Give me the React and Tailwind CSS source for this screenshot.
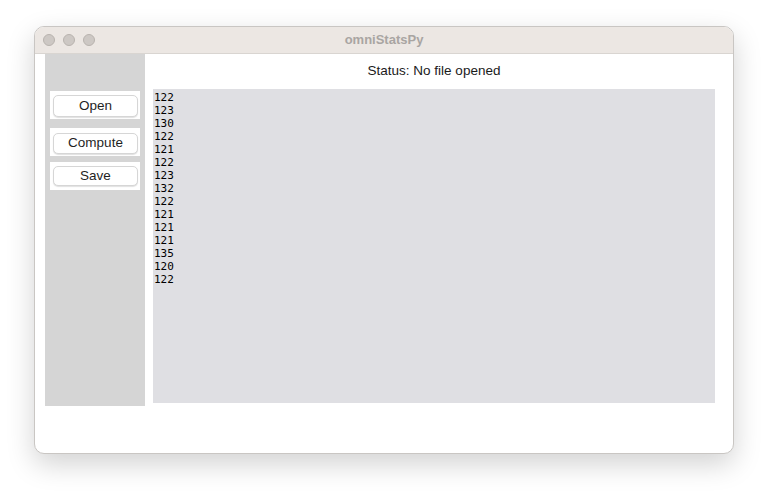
const values = [122, 123, 130, 122, 121, 122, 123, 132, 122, 121, 121, 121, 135, 120, 122];

function Btn({ label, frame, btn }) {
  return (
    <div className={`bg-white ${frame}`}>
      <div
        className={`flex items-center justify-center rounded-[5px] border border-[#d6d6d6] bg-white text-[13.5px] text-[#1f1f1f] shadow-[0_1px_1px_rgba(0,0,0,0.12)] ${btn}`}
      >
        {label}
      </div>
    </div>
  );
}

export default function App() {
  return (
    <div className="h-[496px] w-[768px] bg-white pl-[34px] pt-[26px] font-['Liberation_Sans',sans-serif]">
      <div className="flex h-[428px] w-[700px] flex-col overflow-hidden rounded-[10px] border border-[#c9c6c3] bg-white shadow-[0_10px_28px_rgba(0,0,0,0.18)]">
        <div className="relative flex h-[27px] shrink-0 items-center border-b border-[#d9d5d1] bg-[#ece7e3] pl-[8px]">
          <div className="flex gap-[8px]">
            <span className="h-[12px] w-[12px] rounded-full border border-[#b8b3ae] bg-[#cdc8c4]" />
            <span className="h-[12px] w-[12px] rounded-full border border-[#b8b3ae] bg-[#cdc8c4]" />
            <span className="h-[12px] w-[12px] rounded-full border border-[#b8b3ae] bg-[#cdc8c4]" />
          </div>
          <div className="absolute inset-0 flex items-center justify-center text-[13px] font-bold text-[#a9a5a2]">
            omniStatsPy
          </div>
        </div>
        <div className="flex flex-1 pl-[10px]">
          <div className="flex h-[352px] w-[100px] flex-col bg-[#d5d5d5] px-[5px] pt-[37px]">
            <Btn label="Open" frame="h-[28px] pl-[3px] pr-[2px] pt-[4px]" btn="h-[22px]" />
            <Btn label="Compute" frame="mt-[9px] h-[28px] pl-[3px] pr-[2px] pt-[5px]" btn="h-[21px]" />
            <Btn label="Save" frame="mt-[6px] h-[28px] pl-[3px] pr-[2px] pt-[4px]" btn="h-[20px]" />
          </div>
          <div className="ml-[8px] flex w-[562px] flex-col">
            <div className="flex h-[35px] items-center justify-center text-[13.5px] text-[#1a1a1a]">
              Status: No file opened
            </div>
            <div className="h-[314px] bg-[#dfdfe3] pl-[1px] pt-[2px] font-['DejaVu_Sans_Mono',monospace] text-[11px] leading-[13px] text-[#000]">
              {values.map((v, i) => (
                <div key={i}>{v}</div>
              ))}
            </div>
          </div>
        </div>
      </div>
    </div>
  );
}
